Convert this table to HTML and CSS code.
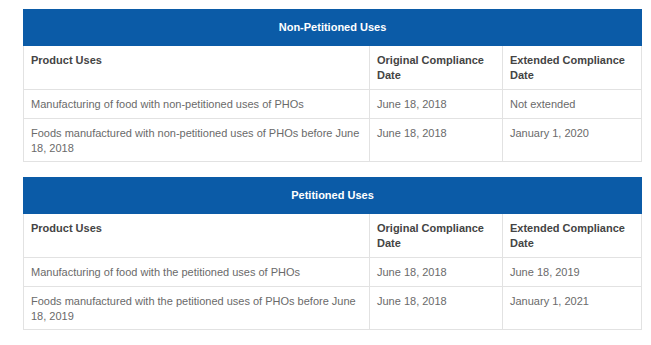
FILE: index.html
```html
<!DOCTYPE html>
<html>
<head>
<meta charset="utf-8">
<link rel="stylesheet" href="styles.css">
</head>
<body>
<div class="page">
  <table class="uses">
    <colgroup><col class="c1"><col class="c2"><col class="c3"></colgroup>
    <thead>
      <tr><th class="title" colspan="3">Non-Petitioned Uses</th></tr>
      <tr class="head"><th>Product Uses</th><th>Original Compliance Date</th><th>Extended Compliance Date</th></tr>
    </thead>
    <tbody>
      <tr class="r1"><td>Manufacturing of food with non-petitioned uses of PHOs</td><td>June 18, 2018</td><td>Not extended</td></tr>
      <tr class="r2"><td>Foods manufactured with non-petitioned uses of PHOs before June 18, 2018</td><td>June 18, 2018</td><td>January 1, 2020</td></tr>
    </tbody>
  </table>
  <table class="uses">
    <colgroup><col class="c1"><col class="c2"><col class="c3"></colgroup>
    <thead>
      <tr><th class="title" colspan="3">Petitioned Uses</th></tr>
      <tr class="head"><th>Product Uses</th><th>Original Compliance Date</th><th>Extended Compliance Date</th></tr>
    </thead>
    <tbody>
      <tr class="r1"><td>Manufacturing of food with the petitioned uses of PHOs</td><td>June 18, 2018</td><td>June 18, 2019</td></tr>
      <tr class="r2"><td>Foods manufactured with the petitioned uses of PHOs before June 18, 2019</td><td>June 18, 2018</td><td>January 1, 2021</td></tr>
    </tbody>
  </table>
</div>
</body>
</html>
```

FILE: styles.css
```css
html, body {
  margin: 0;
  padding: 0;
  background: #fff;
}
.page {
  padding: 9px 0 0 23px;
  display: flex;
  flex-direction: column;
  gap: 15px;
  font-family: "Liberation Sans", Arial, sans-serif;
}
.uses {
  width: 618px;
  border-collapse: collapse;
  table-layout: fixed;
  font-size: 11px;
  line-height: 15px;
  color: #6a6a6a;
}
.c1 { width: 346px; }
.c2 { width: 133px; }
.c3 { width: 139px; }
.uses th, .uses td {
  border: 1px solid #e2e2e2;
  padding: 7px 7px 5px 7px;
  text-align: left;
  vertical-align: top;
}
.uses th.title {
  background: #0b5ba7;
  color: #fff;
  text-align: center;
  font-weight: bold;
  height: 35px;
  padding: 0;
  vertical-align: middle;
  border-color: #0b5ba7;
}
.uses .head th {
  color: #444;
  font-weight: bold;
  height: 30px;
  padding-top: 7px;
  padding-bottom: 6px;
}
.uses .r1 td { height: 16px; }
.uses .r2 td { height: 30px; }
```
